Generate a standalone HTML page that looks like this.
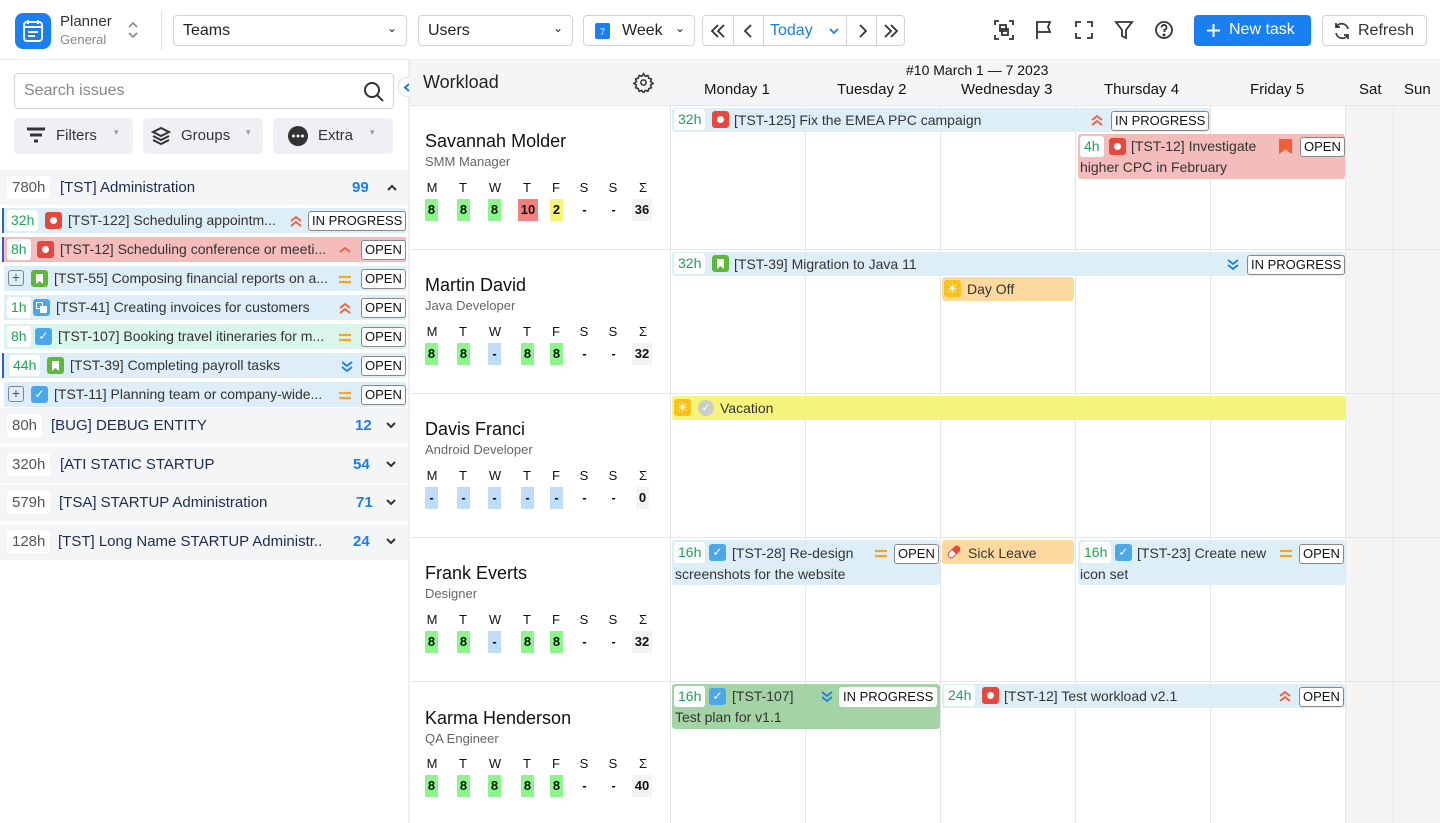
<!DOCTYPE html>
<html><head><meta charset="utf-8"><style>
*{box-sizing:border-box;margin:0;padding:0}
body{width:1440px;height:823px;overflow:hidden;background:#fff;font-family:"Liberation Sans",sans-serif;color:#172b4d;position:relative;font-size:14px}
.a{position:absolute}
.sel{position:absolute;top:15px;height:31px;border:1px solid #d0d4da;border-radius:4px;font-size:16px;color:#222;padding:6px 9px;background:#fff}
.sel .dv{position:absolute;right:9px;top:5px;font-size:12px}
.btnb{position:absolute;top:15px;height:31px;border:1px solid #d0d4da;border-radius:4px;background:#fff}
.ic{position:absolute;top:18px;width:24px;height:24px}
.row{position:absolute;left:2px;width:404px;height:25px;font-size:14px;color:#333;white-space:nowrap;overflow:hidden}
.hrs{position:absolute;top:2px;height:21px;background:#fff;border-radius:3px;color:#1ea35a;padding:2px 4px;font-size:14px}
.sq{position:absolute;width:17px;height:17px;border-radius:3px}
.st{position:absolute;border:1px solid #888;border-radius:3px;background:#fff;font-size:13px;color:#111;padding:1px 3px;line-height:16px}
.pr{position:absolute;width:14px;height:14px}
.grp{position:absolute;left:0;width:408px;height:36px;background:#f3f5f7;font-size:15px;color:#1d2b4f}
.grp .h{position:absolute;left:7px;top:6px;background:#fff;color:#555;padding:3px 5px;border-radius:3px}
.grp .n{position:absolute;top:9px;color:#1a7fe0;font-weight:bold}
.grp .c{position:absolute;left:385px;top:13px}
.vl{position:absolute;top:105px;bottom:0;width:1px;background:#e6e6e6}
.hl{position:absolute;left:410px;right:0;height:1px;background:#e6e6e6}
.ev{position:absolute;border-radius:3px;font-size:14px;color:#333;white-space:nowrap;overflow:hidden}
.nm{position:absolute;left:15px;font-size:18px;color:#111}
.rl{position:absolute;left:15px;font-size:13px;color:#666}
.dl{position:absolute;font-size:13px;color:#111;width:16px;text-align:center}
.dv2{position:absolute;font-size:13px;color:#111;font-weight:bold;height:22px;line-height:22px;text-align:center;min-width:13px;padding:0 1px}
.g{background:#8ef58e}.r{background:#f47f7f}.y{background:#f6f57a}.b{background:#bfdcf8}.s{background:#f3f3f3}
</style></head><body>
<svg width="0" height="0" style="position:absolute">
<defs>
<symbol id="uu" viewBox="0 0 14 14"><path d="M2 7l5-4 5 4M2 12l5-4 5 4" stroke="#f25d3a" stroke-width="1.8" fill="none"/></symbol>
<symbol id="u" viewBox="0 0 14 14"><path d="M2 10l5-4 5 4" stroke="#f25d3a" stroke-width="1.8" fill="none"/></symbol>
<symbol id="dd" viewBox="0 0 14 14"><path d="M2 3l5 4 5-4M2 8l5 4 5-4" stroke="#1a7fe0" stroke-width="1.8" fill="none"/></symbol>
<symbol id="eq" viewBox="0 0 14 14"><path d="M1 5h12M1 10h12" stroke="#f5a623" stroke-width="2.2"/></symbol>
<symbol id="bm" viewBox="0 0 17 17"><path d="M5 4h7v10l-3.5-3L5 14z" fill="#fff"/></symbol>
</defs></svg>
<!-- top bar -->
<div class="a" style="left:15px;top:13px;width:36px;height:36px;background:#1a7ff0;border-radius:8px">
<svg width="36" height="36" viewBox="0 0 36 36"><rect x="9" y="9" width="18" height="19" rx="3" fill="none" stroke="#fff" stroke-width="2"/><path d="M13 7v4M23 7v4M9 14h18M13 19h10M13 23h7" stroke="#fff" stroke-width="2"/></svg></div>
<div class="a" style="left:60px;top:13px;font-size:15px;color:#333">Planner</div>
<div class="a" style="left:60px;top:32px;font-size:13px;color:#888">General</div>
<svg class="a" style="left:127px;top:20px" width="12" height="20" viewBox="0 0 12 20" fill="none" stroke="#888" stroke-width="1.6"><path d="M2 7l4-4 4 4M2 13l4 4 4-4"/></svg>
<div class="a" style="left:161px;top:10px;width:1px;height:40px;background:#e2e2e2"></div>
<div class="sel" style="left:173px;width:234px">Teams<span class="dv">⌄</span></div>
<div class="sel" style="left:418px;width:155px">Users<span class="dv">⌄</span></div>
<div class="sel" style="left:583px;width:112px;padding-left:38px">Week<span class="dv">⌄</span><div class="a" style="left:11px;top:7px;width:15px;height:16px;background:#1a7ff0;border-radius:2px;color:#fff;font-size:9px;text-align:center;line-height:18px">7</div></div>
<div class="btnb" style="left:702px;width:203px;font-size:16px">
<svg class="a" style="left:7px;top:7px" width="16" height="16" viewBox="0 0 16 16" fill="none" stroke="#333" stroke-width="1.8"><path d="M8 2L2 8l6 6M14 2L8 8l6 6"/></svg>
<div class="a" style="left:30px;top:0;width:1px;height:29px;background:#d0d4da"></div>
<svg class="a" style="left:38px;top:7px" width="16" height="16" viewBox="0 0 16 16" fill="none" stroke="#333" stroke-width="1.8"><path d="M10 2L4 8l6 6"/></svg>
<div class="a" style="left:60px;top:0;width:1px;height:29px;background:#d0d4da"></div>
<div class="a" style="left:67px;top:6px;color:#1a7fe0">Today</div>
<svg class="a" style="left:126px;top:11px" width="10" height="8" viewBox="0 0 10 8" fill="none" stroke="#1a7fe0" stroke-width="1.8"><path d="M1 2l4 4 4-4"/></svg>
<div class="a" style="left:143px;top:0;width:1px;height:29px;background:#d0d4da"></div>
<svg class="a" style="left:151px;top:7px" width="16" height="16" viewBox="0 0 16 16" fill="none" stroke="#333" stroke-width="1.8"><path d="M6 2l6 6-6 6"/></svg>
<div class="a" style="left:173px;top:0;width:1px;height:29px;background:#d0d4da"></div>
<svg class="a" style="left:180px;top:7px" width="16" height="16" viewBox="0 0 16 16" fill="none" stroke="#333" stroke-width="1.8"><path d="M2 2l6 6-6 6M8 2l6 6-6 6"/></svg>
</div>
<svg class="ic" style="left:992px" viewBox="0 0 24 24" fill="none" stroke="#333" stroke-width="1.8"><path d="M3 7V3h4M17 3h4v4M21 17v4h-4M7 21H3v-4"/><rect x="8" y="7" width="6" height="6"/><rect x="10" y="11" width="6" height="6"/></svg>
<svg class="ic" style="left:1032px" viewBox="0 0 24 24" fill="none" stroke="#333" stroke-width="1.8"><path d="M5 21V4h13l-2 5 2 5H5"/></svg>
<svg class="ic" style="left:1072px" viewBox="0 0 24 24" fill="none" stroke="#333" stroke-width="1.8"><path d="M4 9V4h5M15 4h5v5M20 15v5h-5M9 20H4v-5"/></svg>
<svg class="ic" style="left:1112px" viewBox="0 0 24 24" fill="none" stroke="#333" stroke-width="1.8"><path d="M4 4h16l-6 8v8l-4-2v-6z"/></svg>
<svg class="ic" style="left:1152px" viewBox="0 0 24 24" fill="none" stroke="#333" stroke-width="1.8"><circle cx="12" cy="12" r="8"/><path d="M9.5 9.5a2.5 2.5 0 1 1 3 2.4V14"/><circle cx="12" cy="17" r=".6" fill="#333"/></svg>
<div class="a" style="left:1194px;top:15px;width:117px;height:31px;background:#1a7ff0;border-radius:4px;color:#fff;font-size:16px;padding:6px 0 0 35px">New task<svg class="a" style="left:12px;top:8px" width="15" height="15" viewBox="0 0 15 15" stroke="#fff" stroke-width="2"><path d="M7.5 1v13M1 7.5h13"/></svg></div>
<div class="btnb" style="left:1322px;width:105px;font-size:16px;color:#333;padding:6px 0 0 35px">Refresh<svg class="a" style="left:9px;top:5px" width="20" height="20" viewBox="0 0 20 20" fill="none" stroke="#333" stroke-width="1.7"><path d="M16 8A6.5 6.5 0 0 0 4 6M4 2v4h4M4 12a6.5 6.5 0 0 0 12 2M16 18v-4h-4"/></svg></div>
<div class="a" style="left:0;top:59px;width:1440px;height:1px;background:#eceef1"></div>

<!-- left panel -->
<div class="a" style="left:408px;top:60px;width:2px;height:763px;background:#eceef1"></div>
<div class="a" style="left:14px;top:73px;width:380px;height:36px;border:1px solid #d0d4da;border-radius:4px;font-size:16px;color:#888;padding:8px 9px">Search issues
<svg class="a" style="left:348px;top:7px" width="22" height="22" viewBox="0 0 22 22" fill="none" stroke="#333" stroke-width="2"><circle cx="9" cy="9" r="7"/><path d="M14 14l6 6"/></svg></div>
<div class="a" style="left:398px;top:77px;width:18px;height:20px;background:#fff;border-radius:9px;border:1px solid #e0e0e0"><svg class="a" style="left:4px;top:5px" width="8" height="9" viewBox="0 0 8 9" fill="none" stroke="#1a7fe0" stroke-width="2"><path d="M6 1L2 4.5 6 8"/></svg></div>
<div class="a" style="left:14px;top:118px;width:119px;height:36px;background:#eef0f3;border-radius:4px;font-size:15px;color:#333;padding:9px 0 0 42px">Filters<span class="a" style="left:100px;top:9px;font-size:9px;color:#999">▾</span><svg class="a" style="left:12px;top:9px" width="20" height="18" viewBox="0 0 20 18"><path d="M1 2h18M4 8h12M8 14h4" stroke="#333" stroke-width="3"/></svg></div>
<div class="a" style="left:143px;top:118px;width:120px;height:36px;background:#eef0f3;border-radius:4px;font-size:15px;color:#333;padding:9px 0 0 38px">Groups<span class="a" style="left:103px;top:9px;font-size:9px;color:#999">▾</span><svg class="a" style="left:8px;top:8px" width="20" height="20" viewBox="0 0 20 20" fill="none" stroke="#333" stroke-width="2"><path d="M10 2l8 4-8 4-8-4zM2 10l8 4 8-4M2 14l8 4 8-4"/></svg></div>
<div class="a" style="left:273px;top:118px;width:120px;height:36px;background:#eef0f3;border-radius:4px;font-size:15px;color:#333;padding:9px 0 0 45px">Extra<span class="a" style="left:97px;top:9px;font-size:9px;color:#999">▾</span><svg class="a" style="left:15px;top:8px" width="20" height="20" viewBox="0 0 20 20"><circle cx="10" cy="10" r="10" fill="#333"/><circle cx="5.5" cy="10" r="1.5" fill="#fff"/><circle cx="10" cy="10" r="1.5" fill="#fff"/><circle cx="14.5" cy="10" r="1.5" fill="#fff"/></svg></div>

<div class="grp" style="top:170px;height:35px"><span class="h">780h</span><span class="a" style="left:60px;top:9px">[TST] Administration</span><span class="n" style="left:352px">99</span><svg class="a" style="left:386px;top:14px" width="12" height="8" viewBox="0 0 12 8" fill="none" stroke="#333" stroke-width="2"><path d="M2 6l4-4 4 4"/></svg></div>

<div class="row" style="top:208px;background:#ddeef8;border-left:2px solid #2f5fc9"><span class="hrs" style="left:3px">32h</span><span class="sq" style="left:41px;top:4px;background:#e5483c"><span class="a" style="left:5px;top:5px;width:7px;height:7px;border-radius:50%;background:#fff"></span></span><span class="a" style="left:64px;top:4px">[TST-122] Scheduling appointm...</span><svg class="pr" style="left:285px;top:6px"><use href="#uu"/></svg><span class="st" style="left:304px;top:3px">IN PROGRESS</span></div>
<div class="row" style="top:237px;background:#f5bcbc;border-left:2px solid #2f5fc9"><span class="hrs" style="left:3px">8h</span><span class="sq" style="left:33px;top:4px;background:#e5483c"><span class="a" style="left:5px;top:5px;width:7px;height:7px;border-radius:50%;background:#fff"></span></span><span class="a" style="left:56px;top:4px">[TST-12] Scheduling conference or meeti...</span><svg class="pr" style="left:334px;top:5px"><use href="#u"/></svg><span class="st" style="left:357px;top:3px">OPEN</span></div>
<div class="row" style="top:266px;background:#ddeef8;left:4px;width:402px"><span class="a" style="left:4px;top:4px;width:16px;height:16px;border:1px solid #7a8599;border-radius:3px;font-size:14px;line-height:13px;text-align:center;color:#555">+</span><span class="sq" style="left:27px;top:4px;background:#5fb83c"><svg width="17" height="17"><use href="#bm"/></svg></span><span class="a" style="left:50px;top:4px">[TST-55] Composing financial reports on a...</span><svg class="pr" style="left:334px;top:6px"><use href="#eq"/></svg><span class="st" style="left:357px;top:3px">OPEN</span></div>
<div class="row" style="top:295px;background:#ddeef8;left:4px;width:402px"><span class="hrs" style="left:3px">1h</span><span class="sq" style="left:29px;top:4px;background:#4ba7e8"><span class="a" style="left:3px;top:3px;width:7px;height:7px;border:1.5px solid #fff;border-radius:1px"></span><span class="a" style="left:7px;top:7px;width:7px;height:7px;background:#fff;border-radius:1px"></span></span><span class="a" style="left:52px;top:4px">[TST-41] Creating invoices for customers</span><svg class="pr" style="left:334px;top:6px"><use href="#uu"/></svg><span class="st" style="left:357px;top:3px">OPEN</span></div>
<div class="row" style="top:324px;background:#daf5ea;left:4px;width:402px"><span class="hrs" style="left:3px">8h</span><span class="sq" style="left:31px;top:4px;background:#4ba7e8;color:#fff;font-size:12px;text-align:center;line-height:17px">✓</span><span class="a" style="left:54px;top:4px">[TST-107] Booking travel itineraries for m...</span><svg class="pr" style="left:334px;top:6px"><use href="#eq"/></svg><span class="st" style="left:357px;top:3px">OPEN</span></div>
<div class="row" style="top:353px;background:#ddeef8;border-left:2px solid #2f5fc9"><span class="hrs" style="left:5px">44h</span><span class="sq" style="left:43px;top:4px;background:#5fb83c"><svg width="17" height="17"><use href="#bm"/></svg></span><span class="a" style="left:66px;top:4px">[TST-39] Completing payroll tasks</span><svg class="pr" style="left:336px;top:6px"><use href="#dd"/></svg><span class="st" style="left:357px;top:3px">OPEN</span></div>
<div class="row" style="top:382px;background:#ddeef8;left:4px;width:402px"><span class="a" style="left:4px;top:4px;width:16px;height:16px;border:1px solid #7a8599;border-radius:3px;font-size:14px;line-height:13px;text-align:center;color:#555">+</span><span class="sq" style="left:27px;top:4px;background:#4ba7e8;color:#fff;font-size:12px;text-align:center;line-height:17px">✓</span><span class="a" style="left:50px;top:4px">[TST-11] Planning team or company-wide...</span><svg class="pr" style="left:334px;top:6px"><use href="#eq"/></svg><span class="st" style="left:357px;top:3px">OPEN</span></div>

<div class="grp" style="top:408px"><span class="h">80h</span><span class="a" style="left:51px;top:9px">[BUG] DEBUG ENTITY</span><span class="n" style="left:355px">12</span><svg class="c" width="12" height="8" viewBox="0 0 12 8" fill="none" stroke="#333" stroke-width="2"><path d="M2 2l4 4 4-4"/></svg></div>
<div class="grp" style="top:447px"><span class="h">320h</span><span class="a" style="left:60px;top:9px">[ATI STATIC STARTUP</span><span class="n" style="left:353px">54</span><svg class="c" width="12" height="8" viewBox="0 0 12 8" fill="none" stroke="#333" stroke-width="2"><path d="M2 2l4 4 4-4"/></svg></div>
<div class="grp" style="top:485px"><span class="h">579h</span><span class="a" style="left:59px;top:9px">[TSA] STARTUP Administration</span><span class="n" style="left:356px">71</span><svg class="c" width="12" height="8" viewBox="0 0 12 8" fill="none" stroke="#333" stroke-width="2"><path d="M2 2l4 4 4-4"/></svg></div>
<div class="grp" style="top:524px"><span class="h">128h</span><span class="a" style="left:58px;top:9px">[TST] Long Name STARTUP Administr..</span><span class="n" style="left:353px">24</span><svg class="c" width="12" height="8" viewBox="0 0 12 8" fill="none" stroke="#333" stroke-width="2"><path d="M2 2l4 4 4-4"/></svg></div>

<!-- calendar header -->
<div class="a" style="left:410px;top:60px;width:1030px;height:45px;background:#f4f5f7"></div>
<div class="a" style="left:423px;top:72px;font-size:18px;color:#222">Workload</div>
<svg class="a" style="left:633px;top:72px" width="21" height="21" viewBox="0 0 24 24" fill="none" stroke="#333" stroke-width="1.8"><circle cx="12" cy="12" r="3"/><path d="M12 2l2 3 3-1 1 3 3 1-1 3 3 2-3 2 1 3-3 1-1 3-3-1-2 3-2-3-3 1-1-3-3-1 1-3-3-2 3-2-1-3 3-1 1-3 3 1z"/></svg>
<div class="a" style="left:906px;top:62px;font-size:14px;color:#111">#10 March 1 — 7 2023</div>
<div class="a" style="left:704px;top:81px;font-size:15px;color:#111">Monday 1</div>
<div class="a" style="left:837px;top:81px;font-size:15px;color:#111">Tuesday 2</div>
<div class="a" style="left:961px;top:81px;font-size:15px;color:#111">Wednesday 3</div>
<div class="a" style="left:1104px;top:81px;font-size:15px;color:#111">Thursday 4</div>
<div class="a" style="left:1250px;top:81px;font-size:15px;color:#111">Friday 5</div>
<div class="a" style="left:1359px;top:81px;font-size:15px;color:#111">Sat</div>
<div class="a" style="left:1404px;top:81px;font-size:15px;color:#111">Sun</div>

<!-- grid -->
<div class="a" style="left:1345px;top:105px;width:95px;height:718px;background:#f4f4f4"></div>
<div class="vl" style="left:670px"></div><div class="vl" style="left:805px"></div><div class="vl" style="left:940px"></div><div class="vl" style="left:1075px"></div><div class="vl" style="left:1210px"></div><div class="vl" style="left:1345px"></div><div class="vl" style="left:1393px"></div>
<div class="hl" style="top:105px"></div><div class="hl" style="top:249px"></div><div class="hl" style="top:393px"></div><div class="hl" style="top:537px"></div><div class="hl" style="top:681px"></div>

<!-- people -->
<div class="a" style="left:410px;top:105px;width:260px;height:144px">
<div class="nm" style="top:26px">Savannah Molder</div><div class="rl" style="top:49px">SMM Manager</div>
<div class="dl" style="left:14px;top:75px">M</div><div class="dl" style="left:45px;top:75px">T</div><div class="dl" style="left:77px;top:75px">W</div><div class="dl" style="left:109px;top:75px">T</div><div class="dl" style="left:138px;top:75px">F</div><div class="dl" style="left:166px;top:75px">S</div><div class="dl" style="left:195px;top:75px">S</div><div class="dl" style="left:225px;top:75px">Σ</div>
<div class="dv2 g" style="left:15px;top:94px">8</div><div class="dv2 g" style="left:47px;top:94px">8</div><div class="dv2 g" style="left:78px;top:94px">8</div><div class="dv2 r" style="left:108px;top:94px;width:20px">10</div><div class="dv2 y" style="left:140px;top:94px">2</div><div class="dv2" style="left:168px;top:94px">-</div><div class="dv2" style="left:197px;top:94px">-</div><div class="dv2 s" style="left:222px;top:94px;width:20px">36</div>
</div>
<div class="a" style="left:410px;top:249px;width:260px;height:144px">
<div class="nm" style="top:26px">Martin David</div><div class="rl" style="top:49px">Java Developer</div>
<div class="dl" style="left:14px;top:75px">M</div><div class="dl" style="left:45px;top:75px">T</div><div class="dl" style="left:77px;top:75px">W</div><div class="dl" style="left:109px;top:75px">T</div><div class="dl" style="left:138px;top:75px">F</div><div class="dl" style="left:166px;top:75px">S</div><div class="dl" style="left:195px;top:75px">S</div><div class="dl" style="left:225px;top:75px">Σ</div>
<div class="dv2 g" style="left:15px;top:94px">8</div><div class="dv2 g" style="left:47px;top:94px">8</div><div class="dv2 b" style="left:78px;top:94px">-</div><div class="dv2 g" style="left:111px;top:94px">8</div><div class="dv2 g" style="left:140px;top:94px">8</div><div class="dv2" style="left:168px;top:94px">-</div><div class="dv2" style="left:197px;top:94px">-</div><div class="dv2 s" style="left:222px;top:94px;width:20px">32</div>
</div>
<div class="a" style="left:410px;top:393px;width:260px;height:144px">
<div class="nm" style="top:26px">Davis Franci</div><div class="rl" style="top:49px">Android Developer</div>
<div class="dl" style="left:14px;top:75px">M</div><div class="dl" style="left:45px;top:75px">T</div><div class="dl" style="left:77px;top:75px">W</div><div class="dl" style="left:109px;top:75px">T</div><div class="dl" style="left:138px;top:75px">F</div><div class="dl" style="left:166px;top:75px">S</div><div class="dl" style="left:195px;top:75px">S</div><div class="dl" style="left:225px;top:75px">Σ</div>
<div class="dv2 b" style="left:15px;top:94px">-</div><div class="dv2 b" style="left:47px;top:94px">-</div><div class="dv2 b" style="left:78px;top:94px">-</div><div class="dv2 b" style="left:111px;top:94px">-</div><div class="dv2 b" style="left:140px;top:94px">-</div><div class="dv2" style="left:168px;top:94px">-</div><div class="dv2" style="left:197px;top:94px">-</div><div class="dv2 s" style="left:226px;top:94px">0</div>
</div>
<div class="a" style="left:410px;top:537px;width:260px;height:144px">
<div class="nm" style="top:26px">Frank Everts</div><div class="rl" style="top:49px">Designer</div>
<div class="dl" style="left:14px;top:75px">M</div><div class="dl" style="left:45px;top:75px">T</div><div class="dl" style="left:77px;top:75px">W</div><div class="dl" style="left:109px;top:75px">T</div><div class="dl" style="left:138px;top:75px">F</div><div class="dl" style="left:166px;top:75px">S</div><div class="dl" style="left:195px;top:75px">S</div><div class="dl" style="left:225px;top:75px">Σ</div>
<div class="dv2 g" style="left:15px;top:94px">8</div><div class="dv2 g" style="left:47px;top:94px">8</div><div class="dv2 b" style="left:78px;top:94px">-</div><div class="dv2 g" style="left:111px;top:94px">8</div><div class="dv2 g" style="left:140px;top:94px">8</div><div class="dv2" style="left:168px;top:94px">-</div><div class="dv2" style="left:197px;top:94px">-</div><div class="dv2 s" style="left:222px;top:94px;width:20px">32</div>
</div>
<div class="a" style="left:410px;top:681px;width:260px;height:142px">
<div class="nm" style="top:27px">Karma Henderson</div><div class="rl" style="top:50px">QA Engineer</div>
<div class="dl" style="left:14px;top:75px">M</div><div class="dl" style="left:45px;top:75px">T</div><div class="dl" style="left:77px;top:75px">W</div><div class="dl" style="left:109px;top:75px">T</div><div class="dl" style="left:138px;top:75px">F</div><div class="dl" style="left:166px;top:75px">S</div><div class="dl" style="left:195px;top:75px">S</div><div class="dl" style="left:225px;top:75px">Σ</div>
<div class="dv2 g" style="left:15px;top:94px">8</div><div class="dv2 g" style="left:47px;top:94px">8</div><div class="dv2 g" style="left:78px;top:94px">8</div><div class="dv2 g" style="left:111px;top:94px">8</div><div class="dv2 g" style="left:140px;top:94px">8</div><div class="dv2" style="left:168px;top:94px">-</div><div class="dv2" style="left:197px;top:94px">-</div><div class="dv2 s" style="left:222px;top:94px;width:20px">40</div>
</div>

<!-- events -->
<div class="ev" style="left:672px;top:108px;width:538px;height:24px;background:#ddeef8"><span class="hrs" style="left:2px;top:1px">32h</span><span class="sq" style="left:40px;top:3px;background:#e5483c"><span class="a" style="left:5px;top:5px;width:7px;height:7px;border-radius:50%;background:#fff"></span></span><span class="a" style="left:62px;top:4px">[TST-125] Fix the EMEA PPC campaign</span><svg class="pr" style="left:418px;top:5px"><use href="#uu"/></svg><span class="st" style="left:439px;top:3px">IN PROGRESS</span></div>
<div class="ev" style="left:1078px;top:134px;width:267px;height:45px;background:#f5bcbc"><span class="hrs" style="left:2px;top:2px">4h</span><span class="sq" style="left:31px;top:4px;background:#e5483c"><span class="a" style="left:5px;top:5px;width:7px;height:7px;border-radius:50%;background:#fff"></span></span><span class="a" style="left:53px;top:4px">[TST-12] Investigate</span><span class="a" style="left:201px;top:5px;width:13px;height:15px;background:#f25d3a;clip-path:polygon(0 0,100% 0,100% 100%,50% 70%,0 100%)"></span><span class="st" style="left:222px;top:3px">OPEN</span><span class="a" style="left:2px;top:25px">higher CPC in February</span></div>
<div class="ev" style="left:672px;top:252px;width:673px;height:24px;background:#ddeef8"><span class="hrs" style="left:2px;top:1px">32h</span><span class="sq" style="left:40px;top:3px;background:#5fb83c"><svg width="17" height="17"><use href="#bm"/></svg></span><span class="a" style="left:62px;top:4px">[TST-39] Migration to Java 11</span><svg class="pr" style="left:554px;top:5px"><use href="#dd"/></svg><span class="st" style="left:575px;top:3px">IN PROGRESS</span></div>
<div class="ev" style="left:942px;top:277px;width:132px;height:24px;background:#fdd9a0"><span class="sq" style="left:2px;top:3px;background:#f8c21c;color:#fff;font-size:13px;text-align:center;line-height:17px">☀</span><span class="a" style="left:25px;top:4px">Day Off</span></div>
<div class="ev" style="left:672px;top:396px;width:673px;height:24px;background:#f6f47a"><span class="sq" style="left:2px;top:3px;background:#f8c21c;color:#fff;font-size:13px;text-align:center;line-height:17px">☀</span><span class="a" style="left:26px;top:4px;width:16px;height:16px;border-radius:50%;background:#ccc;color:#fff;font-size:11px;text-align:center;line-height:16px">✓</span><span class="a" style="left:48px;top:4px">Vacation</span></div>
<div class="ev" style="left:672px;top:540px;width:268px;height:45px;background:#ddeef8"><span class="hrs" style="left:2px;top:2px">16h</span><span class="sq" style="left:37px;top:4px;background:#4ba7e8;color:#fff;font-size:12px;text-align:center;line-height:17px">✓</span><span class="a" style="left:60px;top:5px">[TST-28] Re-design</span><svg class="pr" style="left:202px;top:6px"><use href="#eq"/></svg><span class="st" style="left:222px;top:4px">OPEN</span><span class="a" style="left:3px;top:26px">screenshots for the website</span></div>
<div class="ev" style="left:942px;top:540px;width:132px;height:24px;background:#fdd9a0"><svg class="a" style="left:4px;top:4px" width="16" height="16" viewBox="0 0 16 16"><g transform="rotate(-45 8 8)"><rect x="1" y="5" width="14" height="6" rx="3" fill="#fff" stroke="#d44" stroke-width="1"/><path d="M8 5h4a3 3 0 0 1 0 6H8z" fill="#e5483c"/></g></svg><span class="a" style="left:26px;top:5px">Sick Leave</span></div>
<div class="ev" style="left:1078px;top:540px;width:267px;height:45px;background:#ddeef8"><span class="hrs" style="left:2px;top:2px">16h</span><span class="sq" style="left:37px;top:4px;background:#4ba7e8;color:#fff;font-size:12px;text-align:center;line-height:17px">✓</span><span class="a" style="left:59px;top:5px">[TST-23] Create new</span><svg class="pr" style="left:201px;top:6px"><use href="#eq"/></svg><span class="st" style="left:221px;top:4px">OPEN</span><span class="a" style="left:2px;top:26px">icon set</span></div>
<div class="ev" style="left:672px;top:684px;width:268px;height:45px;background:#a4d4a6"><span class="hrs" style="left:2px;top:2px">16h</span><span class="sq" style="left:37px;top:4px;background:#4ba7e8;color:#fff;font-size:12px;text-align:center;line-height:17px">✓</span><span class="a" style="left:60px;top:4px">[TST-107]</span><svg class="pr" style="left:148px;top:5px"><use href="#dd"/></svg><span class="st" style="left:167px;top:3px;border-color:#fff">IN PROGRESS</span><span class="a" style="left:3px;top:25px">Test plan for v1.1</span></div>
<div class="ev" style="left:942px;top:684px;width:403px;height:24px;background:#ddeef8"><span class="hrs" style="left:2px;top:1px">24h</span><span class="sq" style="left:40px;top:3px;background:#e5483c"><span class="a" style="left:5px;top:5px;width:7px;height:7px;border-radius:50%;background:#fff"></span></span><span class="a" style="left:62px;top:4px">[TST-12] Test workload v2.1</span><svg class="pr" style="left:336px;top:5px"><use href="#uu"/></svg><span class="st" style="left:357px;top:3px">OPEN</span></div>
</body></html>
